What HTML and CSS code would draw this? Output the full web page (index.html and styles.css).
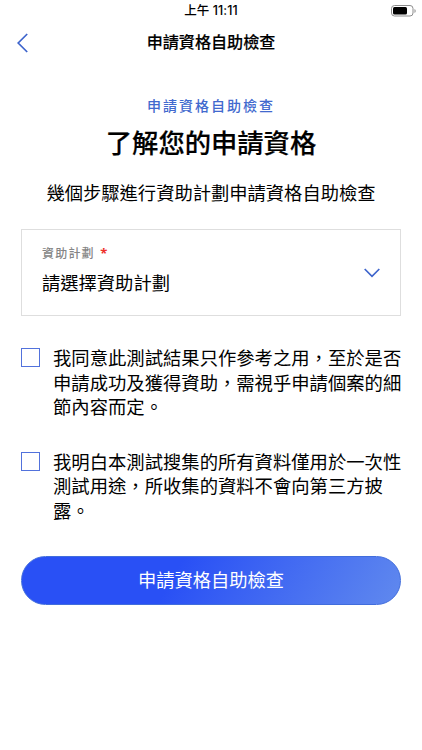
FILE: index.html
```html
<!DOCTYPE html>
<html lang="zh-Hant">
<head>
<meta charset="utf-8">
<meta name="viewport" content="width=device-width, initial-scale=1">
<title>申請資格自助檢查</title>
<link rel="stylesheet" href="styles.css">
</head>
<body>
<div class="status">
  <span class="time">上午 11:11</span>
  <svg class="battery" width="26" height="12" viewBox="0 0 26 12"><rect x=".5" y=".5" width="21.5" height="10.5" rx="3" fill="none" stroke="#8c8c8c"/><rect x="2" y="2" width="14" height="7.5" rx="1.5" fill="#000"/><path d="M23.5 4v4c1.6-.6 1.6-3.4 0-4z" fill="#8c8c8c"/></svg>
</div>
<header class="nav">
  <svg class="back" width="12" height="20" viewBox="0 0 12 20"><path d="M10.2 1L1.2 10l9 9" fill="none" stroke="#3d64cc" stroke-width="1.7"/></svg>
  <h1 class="nav-title">申請資格自助檢查</h1>
</header>
<main class="content">
  <p class="eyebrow">申請資格自助檢查</p>
  <h2 class="title">了解您的申請資格</h2>
  <p class="intro">幾個步驟進行資助計劃申請資格自助檢查</p>
  <div class="select">
    <div class="field">
      <span class="label">資助計劃 <b class="required">*</b></span>
      <span class="value">請選擇資助計劃</span>
    </div>
    <svg class="chevron" width="16" height="10" viewBox="0 0 16 10"><path d="M.7 1L8 8.3 15.3 1" fill="none" stroke="#3d64cc" stroke-width="1.7"/></svg>
  </div>
  <label class="check"><span class="box"></span><span class="check-text">我同意此測試結果只作參考之用，至於是否<br>申請成功及獲得資助，需視乎申請個案的細<br>節內容而定。</span></label>
  <label class="check"><span class="box"></span><span class="check-text">我明白本測試搜集的所有資料僅用於一次性<br>測試用途，所收集的資料不會向第三方披<br>露。</span></label>
  <button class="submit">申請資格自助檢查</button>
</main>
</body>
</html>
```
FILE: styles.css
```css
* { box-sizing: border-box; margin: 0; padding: 0; }
body { width: 422px; height: 750px; background: #fff; color: #000; font-family: Inter, "Noto Sans CJK TC", sans-serif; overflow: hidden; }
.status { height: 22px; display: grid; grid-template-columns: 1fr auto 1fr; align-items: center; }
.time { grid-column: 2; font-size: 12.5px; line-height: 22px; font-weight: 500; letter-spacing: .1px; }
.battery { justify-self: end; margin-right: 5px; margin-bottom: 1px; }
.nav { height: 41px; display: grid; grid-template-columns: 1fr auto 1fr; align-items: center; }
.back { margin-left: 17px; margin-top: 1px; }
.nav-title { font-size: 16.1px; line-height: 23px; font-weight: 500; -webkit-text-stroke: .15px #000; }
.content { padding: 32px 21px 0; }
.eyebrow { text-align: center; color: #4169ce; font-size: 14px; line-height: 22px; font-weight: 500; letter-spacing: 2px; }
.title { text-align: center; font-size: 26.3px; line-height: 38px; margin-top: 8px; font-weight: 500; -webkit-text-stroke: .2px #000; }
.intro { text-align: center; font-size: 18.3px; line-height: 28px; margin-top: 16px; white-space: nowrap; }
.select { height: 87px; margin-top: 22px; border: 1px solid #dedede; padding: 0 20px; display: flex; align-items: center; justify-content: space-between; }
.field { display: flex; flex-direction: column; margin-bottom: 4px; }
.label { color: #858585; font-size: 12px; line-height: 18px; letter-spacing: 1.2px; font-weight: 500; }
.required { color: #ee2f2a; font: 700 13px/12px "Open Sans", sans-serif; margin-left: 1px; }
.value { font-size: 18.3px; line-height: 28px; margin-top: 6px; }
.check { display: flex; margin-top: 30px; }
.box { width: 19px; height: 19px; border: 1px solid #5272dc; margin: 2px 13px 0 0; flex: none; }
.check-text { font-size: 18.33px; line-height: 24.5px; white-space: nowrap; }
.submit { display: block; width: 380px; height: 49px; margin-top: 33px; padding-bottom: 3px; border: 1px solid #416ddc; border-radius: 25px; color: #fff; font: inherit; font-size: 18.3px; background: linear-gradient(120deg, #2950f5 40%, #6089ee); }
```
